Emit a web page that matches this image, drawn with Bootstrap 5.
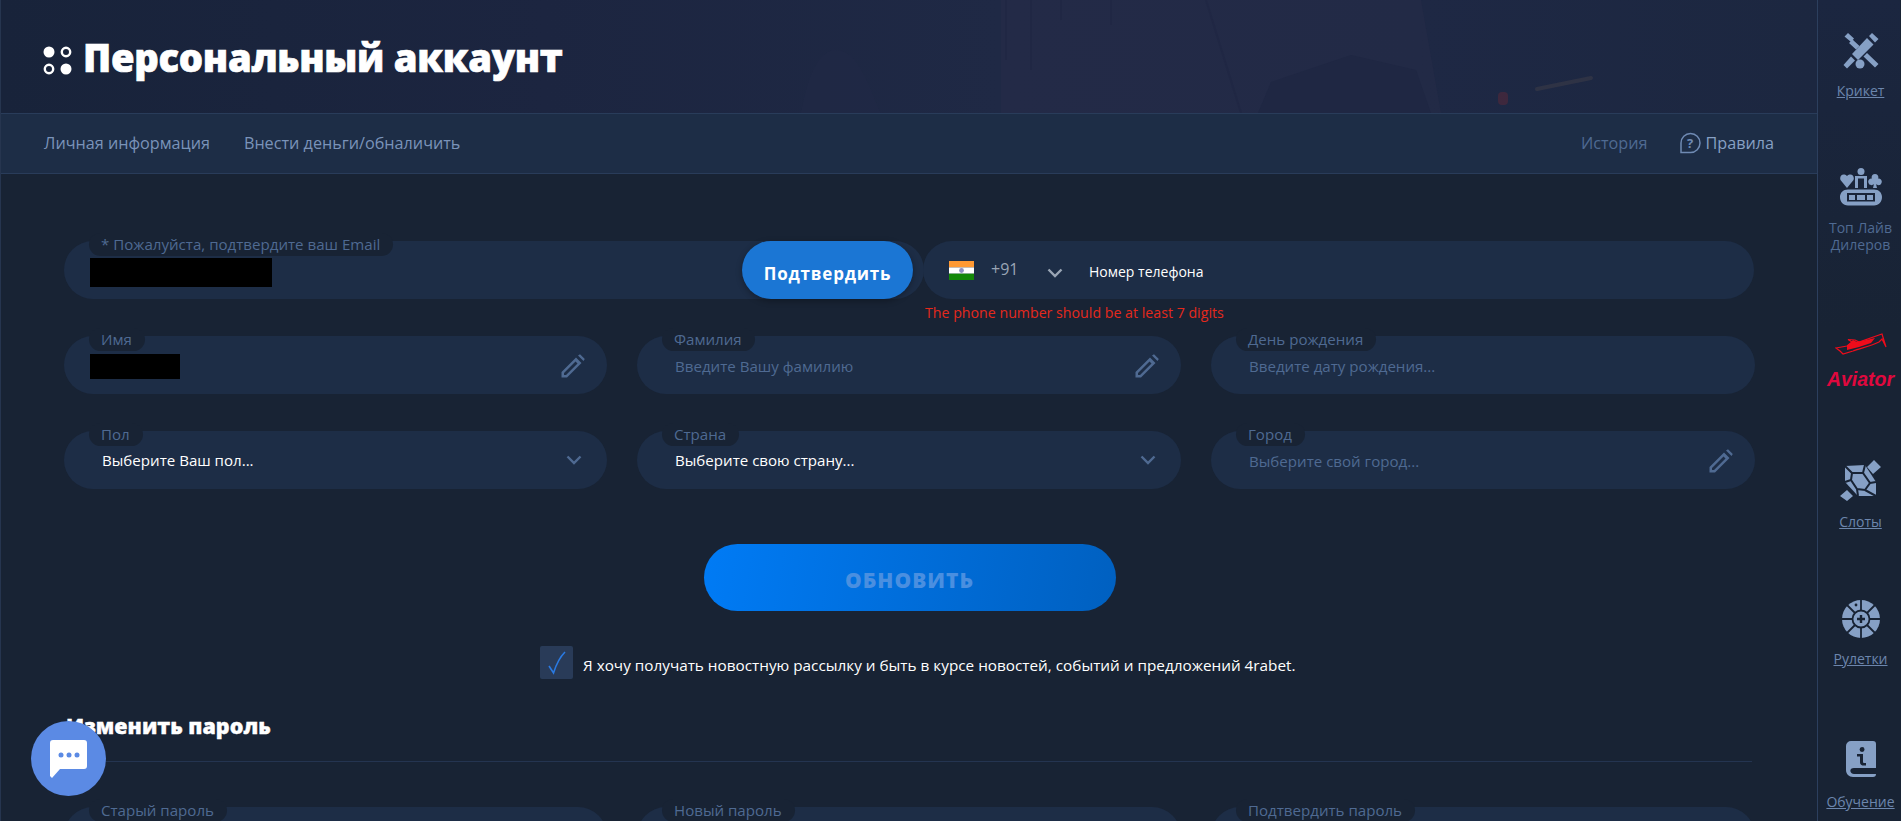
<!DOCTYPE html>
<html lang="ru">
<head>
    <meta charset="UTF-8">
    <meta name="viewport" content="width=device-width, initial-scale=1.0">
    <title>Персональный аккаунт</title>
    <link href="https://cdn.jsdelivr.net/npm/bootstrap@5.3.2/dist/css/bootstrap.min.css" rel="stylesheet">
    <style>
        html, body { height: 100%; overflow: hidden; }
        body { background: #182334; font-family: "Open Sans", "Liberation Sans", sans-serif; font-size: 15.1px; color: #fff; }
        .page-wrap { height: 821px; overflow: hidden; }
        .main-col { width: 1817px; flex: none; border-left: 1px solid #26354f; }

        /* header */
        .acc-head { height: 113px; background: linear-gradient(90deg, #18233a 0%, #1c2540 30%, #1f2945 55%, #1e2844 78%, #1c2740 100%); overflow: hidden; }
        .acc-deco { position: absolute; left: 0; top: 0; }
        .acc-title { font-size: 38.2px; font-weight: 800; line-height: 1; letter-spacing: -.3px; margin: 0; padding-left: 42px; padding-top: 38px; position: relative; -webkit-text-stroke: .7px #fff; }
        .acc-title svg { margin-right: 11px; vertical-align: -3px; }

        /* tabs */
        .tab-bar { height: 61px; background: #1d2d46; border-top: 1px solid #293c5a; border-bottom: 1px solid #293c5a; padding: 0 43px; font-size: 16.2px; }
        .tab-bar a { color: #7a93b9; text-decoration: none; }
        .tab-bar a.dim { color: #4f6a92; }
        .tab-bar a.rules { color: #87a0c4; }

        /* form */
        .form-area { padding: 67px 62px 0 63px; }
        .form-three { display: grid; grid-template-columns: 543px 544px 544px; column-gap: 30px; row-gap: 37px; }
        .pill-field { height: 58px; background: #1d2d46; border-radius: 29px; position: relative; padding: 16px 24px 0 38px; }
        .pill-field input { background: transparent; border: 0; outline: 0; width: 100%; color: #fff; padding: 0; font-size: 15.1px; height: 27px; }
        .pill-field input::placeholder { color: #4f6a92; opacity: 1; }
        .pill-tag { position: absolute; left: 25px; top: -8px; height: 23px; line-height: 22px; background: #182334; border-radius: 12px; padding: 0 13px 0 12px; color: #4f6a92; font-size: 15.1px; white-space: nowrap; }
        .pill-side { position: absolute; right: 22px; top: 18px; }
        .pick-text { line-height: 27px; }
        .hidden-box { position: absolute; background: #000; }
        .top-row { position: relative; height: 95px; }
        .email-field { width: 860px; }
        .confirm-btn { position: absolute; left: 678px; top: 0; width: 171px; height: 58px; border: 0; border-radius: 29px; background: #1b76d4; color: #fff; font-weight: 700; font-size: 17px; letter-spacing: .8px; padding-top: 9px; box-shadow: 0 2px 6px rgba(0,0,0,.3); }
        .phone-field { position: absolute; left: 859px; top: 0; width: 831px; height: 58px; background: #1d2d46; border-radius: 29px; padding-left: 26px; }
        .phone-code { color: #9aa5b5; font-size: 16px; margin-left: 17px; width: 28px; position: relative; top: -1px; }
        .phone-chev { margin-left: 28px; position: relative; top: 3px; }
        .phone-ph { font-size: 14px; margin-left: 26px; position: relative; top: 1px; }
        .phone-err { position: absolute; left: 861px; top: 62px; color: #e4291c; font-size: 14.2px; line-height: 20px; white-space: nowrap; }

        .update-btn { display: block; width: 412px; height: 67px; margin: 55px auto 0; border: 0; border-radius: 34px; background: linear-gradient(100deg, #007bf5, #0060c0); color: #4a8fe0; font-weight: 800; font-size: 21px; letter-spacing: 1px; padding-top: 8px; }
        .news-line { margin-top: 35px; padding-left: 476px; }
        .news-box { width: 33px; height: 33px; background: #293b58; border-radius: 2px; flex: none; margin-right: 10px; }
        .news-text { margin-top: 5px; font-size: 15.3px; }
        .sub-title { font-size: 21.5px; font-weight: 800; margin: 33px 0 0 2px; line-height: 28px; -webkit-text-stroke: .4px #fff; }
        .sub-line { height: 1px; background: #243450; margin: 21px 3px 45px 0; }

        /* right rail */
        .side-rail { width: 83px; flex: none; border-left: 1px solid #2c3f5e; background: linear-gradient(180deg, #1b2640, #182334 40%); position: relative; }
        .rail-item { position: absolute; left: 1px; width: 83px; text-align: center; color: #6c86ad; font-size: 14px; line-height: 17px; text-decoration: underline; }
        .rail-item.plain { color: #4f6a92; text-decoration: none; }
        .rail-item svg { display: block; margin: 0 auto; }
        .avi-word { font-family: "Liberation Sans", sans-serif; font-style: italic; font-weight: 700; font-size: 19.5px; line-height: 18px; color: #e0083e; text-decoration: none; }

        .chat-btn { position: fixed; left: 31px; top: 721px; width: 75px; height: 75px; border-radius: 50%; background: #5b8ae4; }
    </style>
</head>
<body>
    <div class="page-wrap d-flex">
        <div class="main-col">
            <!-- header -->
            <div class="acc-head position-relative">
                <svg class="acc-deco" width="1817" height="113" fill="none">
                    <path d="M1000 0 H1420 L1440 113 H1000 Z" fill="#272d49" opacity=".45"/>
                    <path d="M800 113 C808 70 820 50 835 50 C860 50 872 100 880 113 Z" fill="#262c48" opacity=".3"/>
                    <path d="M1257 113 L1270 82 L1350 55 L1415 70 L1430 113 Z" fill="#1f2743"/>
                    <path d="M1005 0 V60 M1030 0 V70 M1060 0 V20 M1110 0 V25 M1205 0 L1240 113" stroke="#1f2743" stroke-width="2" opacity=".7"/>
                    <path d="M1536 89 L1590 78" stroke="#3a3a48" stroke-width="4" stroke-linecap="round" opacity=".6"/>
                    <rect x="1497" y="92" width="10" height="13" rx="4" fill="#46283c" opacity=".8"/>
                </svg>
                <h1 class="acc-title">
                    <svg width="29" height="29" viewBox="0 0 29 29">
                        <circle cx="6" cy="6" r="5.500" fill="#fff"/>
                        <circle cx="23" cy="6" r="4.200" fill="none" stroke="#fff" stroke-width="2.400"/>
                        <circle cx="6" cy="23" r="4.200" fill="none" stroke="#fff" stroke-width="2.400"/>
                        <circle cx="23" cy="23" r="5.500" fill="#fff"/>
                    </svg>Персональный аккаунт</h1>
            </div>

            <!-- tabs -->
            <div class="tab-bar d-flex align-items-center justify-content-between">
                <div class="d-flex" style="gap:34px">
                    <a href="#">Личная информация</a>
                    <a href="#">Внести деньги/обналичить</a>
                </div>
                <div class="d-flex align-items-center" style="gap:32px">
                    <a href="#" class="dim">История</a>
                    <a href="#" class="rules d-flex align-items-center">
                        <svg width="22" height="22" viewBox="0 0 22 22" fill="none" class="me-1">
                            <path d="M2 20.500 V11 A9.500 9.500 0 1 1 11.500 20.500 Z" stroke="#6f8ab3" stroke-width="1.500"/>
                            <text x="11" y="15.500" text-anchor="middle" font-size="13" font-weight="700" fill="#6f8ab3" font-family="Open Sans">?</text>
                        </svg>Правила</a>
                </div>
            </div>

            <div class="form-area">
                <!-- email + phone -->
                <div class="top-row">
                    <div class="pill-field email-field">
                        <span class="pill-tag">* Пожалуйста, подтвердите ваш Email</span>
                        <span class="hidden-box" style="left:26px;top:17px;width:182px;height:29px"></span>
                    </div>
                    <button class="confirm-btn" type="button">Подтвердить</button>
                    <div class="phone-field d-flex align-items-center">
                        <svg width="25" height="19" viewBox="0 0 25 19">
                            <rect width="25" height="6.400" fill="#ff9933"/>
                            <rect y="6.400" width="25" height="6.300" fill="#fff"/>
                            <rect y="12.700" width="25" height="6.300" fill="#138808"/>
                            <circle cx="12.500" cy="9.500" r="2.400" fill="#8c8fc0"/>
                        </svg>
                        <span class="phone-code">+91</span>
                        <svg class="phone-chev" width="16" height="10" viewBox="0 0 16 10" fill="none">
                            <path d="M1.500 1.500 L8 8 L14.500 1.500" stroke="#9aa5b5" stroke-width="2.400"/>
                        </svg>
                        <span class="phone-ph">Номер телефона</span>
                    </div>
                    <div class="phone-err">The phone number should be at least 7 digits</div>
                </div>

                <div class="form-three">
                    <div class="pill-field">
                        <span class="pill-tag">Имя</span>
                        <span class="hidden-box" style="left:26px;top:18px;width:90px;height:25px"></span>
                        <svg class="pill-side" width="24" height="24" viewBox="0 0 24 24"><path d="M0.500 23.500 V18 L15 3.500 L20.500 9 L6 23.500 Z M3 19 V21 H5 L16.500 9.500 L14.500 7.500 Z M17 1.500 L19 .2 L23.800 5 L22.500 7 Z" fill="#4f6a92" fill-rule="evenodd"/></svg>
                    </div>
                    <div class="pill-field">
                        <span class="pill-tag">Фамилия</span>
                        <input type="text" placeholder="Введите Вашу фамилию">
                        <svg class="pill-side" width="24" height="24" viewBox="0 0 24 24"><path d="M0.500 23.500 V18 L15 3.500 L20.500 9 L6 23.500 Z M3 19 V21 H5 L16.500 9.500 L14.500 7.500 Z M17 1.500 L19 .2 L23.800 5 L22.500 7 Z" fill="#4f6a92" fill-rule="evenodd"/></svg>
                    </div>
                    <div class="pill-field">
                        <span class="pill-tag">День рождения</span>
                        <input type="text" placeholder="Введите дату рождения...">
                    </div>
                    <div class="pill-field">
                        <span class="pill-tag">Пол</span>
                        <div class="pick-text">Выберите Ваш пол...</div>
                        <svg class="pill-side" style="top:24px;right:25px" width="16" height="10" viewBox="0 0 16 10" fill="none"><path d="M1.500 1.500 L8 8 L14.500 1.500" stroke="#4f6a92" stroke-width="2.400"/></svg>
                    </div>
                    <div class="pill-field">
                        <span class="pill-tag">Страна</span>
                        <div class="pick-text">Выберите свою страну...</div>
                        <svg class="pill-side" style="top:24px;right:25px" width="16" height="10" viewBox="0 0 16 10" fill="none"><path d="M1.500 1.500 L8 8 L14.500 1.500" stroke="#4f6a92" stroke-width="2.400"/></svg>
                    </div>
                    <div class="pill-field">
                        <span class="pill-tag">Город</span>
                        <input type="text" placeholder="Выберите свой город...">
                        <svg class="pill-side" width="24" height="24" viewBox="0 0 24 24"><path d="M0.500 23.500 V18 L15 3.500 L20.500 9 L6 23.500 Z M3 19 V21 H5 L16.500 9.500 L14.500 7.500 Z M17 1.500 L19 .2 L23.800 5 L22.500 7 Z" fill="#4f6a92" fill-rule="evenodd"/></svg>
                    </div>
                </div>

                <button class="update-btn" type="button">ОБНОВИТЬ</button>

                <div class="news-line d-flex align-items-center">
                    <span class="news-box d-flex align-items-center justify-content-center">
                        <svg width="18" height="24" viewBox="0 0 18 24" fill="none"><path d="M1 15 L5.500 22 C8 14 11 7 17 1" stroke="#2a7ae2" stroke-width="1.600"/></svg>
                    </span>
                    <span class="news-text">Я хочу получать новостную рассылку и быть в курсе новостей, событий и предложений 4rabet.</span>
                </div>

                <div class="sub-title">Изменить пароль</div>
                <div class="sub-line"></div>

                <div class="form-three">
                    <div class="pill-field"><span class="pill-tag">Старый пароль</span></div>
                    <div class="pill-field"><span class="pill-tag">Новый пароль</span></div>
                    <div class="pill-field"><span class="pill-tag">Подтвердить пароль</span></div>
                </div>
            </div>
        </div>

        <!-- right rail -->
        <div class="side-rail">
            <a href="#" class="rail-item" style="top:33px">
                <svg width="36" height="36" viewBox="0 0 36 36" fill="#86a0c5">
                    <path d="M29 0 L35.500 6 L32 9.500 L26 3 Z M24 5 L30.500 11.500 L15 27 L9 21 Z"/>
                    <path d="M5 0 L11 5.500 L8 9 L1.500 3.500 Z M9.500 6.500 L16.500 13 L13 16.500 L6 10 Z M24 20 L35.500 31 L32 34.500 L20.500 23.500 Z"/>
                    <path d="M8 23.500 L12 27.500 L4 35.500 L0.500 32 Z"/>
                    <circle cx="17" cy="31" r="4.500"/>
                </svg>
                <span class="d-block" style="margin-top:13px">Крикет</span>
            </a>
            <a href="#" class="rail-item plain" style="top:168px">
                <svg width="42" height="38" viewBox="0 0 42 38" fill="#86a0c5">
                    <circle cx="21" cy="3.500" r="3.500"/>
                    <path d="M15 8 H27 V20 H24 V10.500 H18 V20 H15 Z"/>
                    <path d="M7 20 L0.500 12 C-1 8 3 4.500 7 8 C11 4.500 15 8 13.500 12 Z M35 6 C38 6 39 9 38 10.500 C41 10 43 13 41 16 C39.500 18 37 17 36 16 L37 20 H33 L34 16 C33 17 30.500 18 29 16 C27 13 29 10 32 10.500 C31 9 32 6 35 6 Z"/>
                    <path fill-rule="evenodd" d="M8 21.500 H34 C39 21.500 42 25 42 29 C42 33.500 39 37.500 34 37.500 H8 C3 37.500 0 33.500 0 29 C0 25 3 21.500 8 21.500 Z M7 25 V33.500 H35 V25 Z"/>
                    <path d="M9 27 H15 V32 H9 Z M17 27 H25 V32 H17 Z M27 27 H33 V32 H27 Z"/>
                </svg>
                <span class="d-block" style="margin-top:13px">Топ Лайв Дилеров</span>
            </a>
            <div class="rail-item avi-word" style="top:333px">
                <svg width="52" height="23" viewBox="0 0 52 23" fill="none" stroke="#ef0c1b">
                    <path d="M1 15 L12 13 L17 9 L13 6.500 L20 7 L24 9 L44 2 L47 1 L51 14 L47 6 L44 9 C36 13 26 15 18 18 L8 21 L5 18 L1 15 Z" stroke-width="1.200"/>
                    <path d="M12 13 L18 7 L22 9 L40 5 L36 10 L24 14 L12 17 Z" fill="#ef0c1b" stroke="none"/>
                </svg>
                <span class="d-block" style="margin-top:14px">Aviator</span>
            </div>
            <a href="#" class="rail-item" style="top:460px">
                <svg width="42" height="41" viewBox="0 0 42 41" fill="#86a0c5">
                    <path d="M5 6 L25 5 L36 22 V36 L18 36 L5 22 Z"/>
                    <path d="M12 13 H23 L30 23 L25 30 L17 29 L11 20 Z M5 6 L12 13 M25 5 L23 13 M36 22 L30 23 M36 36 L25 30 M18 36 L17 29 M5 22 L11 20" fill="none" stroke="#182334" stroke-width="2"/>
                    <path d="M34 0 L41 7 L33 14 L27 7 Z M7 30 L13 36 L7 41 L0 36 Z"/>
                </svg>
                <span class="d-block" style="margin-top:12px">Слоты</span>
            </a>
            <a href="#" class="rail-item" style="top:600px">
                <svg width="38" height="38" viewBox="0 0 38 38">
                    <circle cx="19" cy="19" r="19" fill="#86a0c5"/>
                    <path d="M19 0 V12 M19 26 V38 M0 19 H12 M26 19 H38 M5 5 L13 13 M33 5 L25 13 M5 33 L13 25 M33 33 L25 25" stroke="#182334" stroke-width="1.800"/>
                    <circle cx="19" cy="19" r="8.500" fill="#86a0c5" stroke="#182334" stroke-width="1.800"/>
                    <path d="M19 15 V23 M15 19 H23" stroke="#182334" stroke-width="2.400"/>
                    <circle cx="14" cy="5" r="1.400" fill="#182334"/>
                </svg>
                <span class="d-block" style="margin-top:12px">Рулетки</span>
            </a>
            <a href="#" class="rail-item" style="top:741px">
                <svg width="30" height="36" viewBox="0 0 30 36" fill="#86a0c5">
                    <path fill-rule="evenodd" d="M5 0 H27 A3 3 0 0 1 30 3 V27 H8 C5 27 4 29 4.500 30.500 C5 32 6 33 8 33 H30 V33 A3 3 0 0 1 27 36 H7 C3 36 0 33 0 29 V5 A5 5 0 0 1 5 0 Z M16 6 A2.500 2.500 0 1 0 16.100 11 A2.500 2.500 0 0 0 16 6 Z M11 13 V15.500 H14 V21 C14 24 16 25 20 24.500 V22 C17.500 22.300 17 22 17 20.500 V13 Z"/>
                </svg>
                <span class="d-block" style="margin-top:16px">Обучение</span>
            </a>
        </div>
    </div>

    <div class="chat-btn d-flex align-items-center justify-content-center">
        <svg width="37" height="38" viewBox="0 0 37 38">
            <path d="M3 0 H34 A3 3 0 0 1 37 3 V26 A3 3 0 0 1 34 29 H10 L2 38 L0 36 V3 A3 3 0 0 1 3 0 Z" fill="#fff"/>
            <circle cx="11" cy="15" r="2.500" fill="#5b8ae4"/>
            <circle cx="19" cy="15" r="2.500" fill="#5b8ae4"/>
            <circle cx="27" cy="15" r="2.500" fill="#5b8ae4"/>
        </svg>
    </div>

    <script src="https://cdn.jsdelivr.net/npm/bootstrap@5.3.2/dist/js/bootstrap.bundle.min.js"></script>
</body>
</html>
